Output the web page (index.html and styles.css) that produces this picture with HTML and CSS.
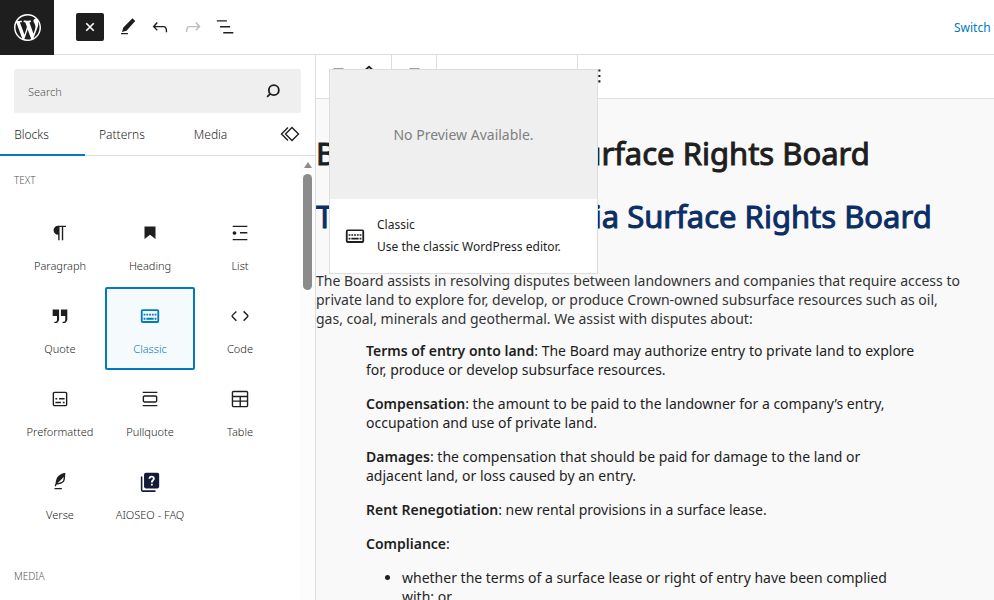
FILE: index.html
```html
<!DOCTYPE html>
<html lang="en">
<head>
<meta charset="utf-8">
<meta name="viewport" content="width=device-width, initial-scale=1">
<title>Edit Page</title>
<link rel="stylesheet" href="styles.css">
</head>
<body>
<div class="editor">
  <header class="topbar">
    <a class="brand" href="#" aria-label="View Pages">
      <svg viewBox="0 0 20 20"><path d="M20 10c0-5.51-4.49-10-10-10C4.48 0 0 4.49 0 10c0 5.52 4.48 10 10 10 5.51 0 10-4.48 10-10zM7.78 15.37L4.37 6.22c.55-.02 1.17-.08 1.17-.08.5-.06.44-1.13-.06-1.11 0 0-1.45.11-2.37.11-.18 0-.37 0-.58-.01C4.12 2.69 6.87 1.11 10 1.11c2.33 0 4.45.87 6.05 2.34-.68-.11-1.65.39-1.65 1.58 0 .74.45 1.36.9 2.1.35.61.55 1.36.55 2.46 0 1.49-1.4 5-1.4 5l-3.03-8.37c.54-.02.82-.17.82-.17.5-.05.44-1.25-.06-1.22 0 0-1.44.12-2.38.12-.87 0-2.33-.12-2.33-.12-.5-.03-.56 1.2-.06 1.22l.92.08 1.26 3.41zM17.41 10c.24-.64.74-1.87.43-4.25.7 1.29 1.05 2.71 1.05 4.25 0 3.29-1.73 6.24-4.4 7.78.97-2.59 1.94-5.2 2.92-7.78zM6.1 18.09C3.12 16.65 1.11 13.53 1.11 10c0-1.3.23-2.48.72-3.59C3.25 10.3 4.67 14.2 6.1 18.09zm4.03-6.63l2.58 6.98c-.86.29-1.76.45-2.71.45-.79 0-1.57-.11-2.29-.33.81-2.38 1.62-4.74 2.42-7.1z"/></svg>
    </a>
    <div class="tools">
      <button class="tool tool-close" type="button" aria-label="Toggle block inserter"><svg viewBox="0 0 24 24"><path d="M7.500 7.500l9 9M16.500 7.500l-9 9" fill="none" stroke="currentColor" stroke-width="2"/></svg></button>
      <button class="tool" type="button" aria-label="Tools"><svg viewBox="0 0 24 24"><path d="m21 5.500-3-3L8 12.500l-1.500 5 5-1.500L21 5.500Zm-8 13H5.500V20H13v-1.500Z"/></svg></button>
      <button class="tool" type="button" aria-label="Undo"><svg viewBox="0 0 24 24"><path d="M18.300 11.700c-.6-.6-1.400-.9-2.300-.9H6.700l2.900-3.300-1.100-1-4.500 5L8.500 16l1-1-2.700-2.700H16c.5 0 .9.200 1.300.5 1 1 1 3.400 1 4.500v.3h1.500v-.2c0-1.500 0-4.300-1.500-5.700z"/></svg></button>
      <button class="tool" type="button" aria-label="Redo" disabled><svg viewBox="0 0 24 24"><path d="M15.600 6.500l-1.100 1 2.900 3.300H8c-.9 0-1.700.3-2.300.9-1.400 1.500-1.400 4.200-1.400 5.600v.2h1.500v-.3c0-1.100 0-3.500 1-4.500.3-.3.700-.5 1.300-.5h9.200L14.500 15l1.100 1.100 4.600-4.600-4.600-5z"/></svg></button>
      <button class="tool" type="button" aria-label="Document overview"><svg viewBox="0 0 24 24"><path d="M2 4.500h11v1.600H2V4.500ZM5.500 11h11v1.600h-11V11ZM20 17.500H9v1.600h11v-1.600Z"/></svg></button>
    </div>
    <a class="switch" href="#">Switch to</a>
  </header>

  <div class="workspace">
    <aside class="inserter">
      <div class="search">
        <label class="sr" for="block-search">Search for blocks</label>
        <input id="block-search" type="text" placeholder="Search">
        <svg viewBox="0 0 24 24"><path d="M13 5a6 6 0 1 1 0 12a6 6 0 1 1 0-12M8.800 15.200L5 19" fill="none" stroke="currentColor" stroke-width="2.200"/></svg>
      </div>
      <nav class="tabs">
        <button class="tab tab-active" type="button">Blocks</button>
        <button class="tab" type="button">Patterns</button>
        <button class="tab" type="button">Media</button>
        <button class="tab tab-icon" type="button" aria-label="Synced patterns"><svg viewBox="0 0 20 16"><path d="M12 1.500L18.500 8 12 14.500 5.500 8zM8 1.500L1.500 8 8 14.500" /></svg></button>
      </nav>
      <div class="library">
        <div class="groups">
          <h2 class="group-title">Text</h2>
          <div class="blocks">
            <button class="block" type="button"><svg viewBox="0 0 24 24"><path d="M10 14v6h1.500V5.500H14V20h1.500V5.500h3V4H10a5 5 0 0 0 0 10z"/></svg>Paragraph</button>
            <button class="block" type="button"><svg viewBox="0 0 24 24"><path d="M6 5v13.600l6-4.700 6 4.700V5z"/></svg>Heading</button>
            <button class="block" type="button"><svg viewBox="0 0 24 24"><path d="M4 4v1.500h16V4H4zm8 8.500h8V11h-8v1.500zM4 20h16v-1.500H4V20zm4-8c0-1.100-.9-2-2-2s-2 .9-2 2 .9 2 2 2 2-.9 2-2z"/></svg>List</button>
            <button class="block" type="button"><svg viewBox="0 0 24 24"><path d="M13 5v7h4.700v4c0 .8-.2 1.400-.5 1.700-.6.6-1.200.6-2.100.5h-.3v1.500h.5c1 0 2.300-.1 3.300-1 .6-.6 1.400-1.600 1.400-2.800V5H13zm-9 7h4.700v4c0 .8-.2 1.400-.5 1.700-.6.6-1.200.6-2.100.5h-.3v1.500h.5c1 0 2.300-.1 3.300-1 .6-.6 1.400-1.600 1.400-2.800V5H4v7z"/></svg>Quote</button>
            <button class="block block-selected" type="button"><svg viewBox="0 0 24 24"><path d="M20 6.500v11H4v-11h16M20 4.500H4a2 2 0 0 0-2 2v11c0 1.100.9 2 2 2h16a2 2 0 0 0 2-2v-11a2 2 0 0 0-2-2zM5 9.500h2v2H5zM8 9.500h2v2H8zM11 9.500h2v2h-2zM14 9.500h2v2h-2zM17 9.500h2v2h-2zM5 14h2v2H5zM8 14h8v2H8zM17 14h2v2h-2z"/></svg>Classic</button>
            <button class="block" type="button"><svg viewBox="0 0 24 24"><path d="M20.800 10.700l-4.300-4.300-1.100 1.100 4.300 4.300c.1.100.1.300 0 .4l-4.300 4.300 1.100 1.100 4.300-4.300c.7-.8.7-1.900 0-2.600zM4.200 11.800l4.300-4.300-1-1-4.300 4.300c-.7.7-.7 1.800 0 2.500l4.300 4.300 1.100-1.100-4.300-4.300c-.2-.1-.2-.3-.1-.4z"/></svg>Code</button>
            <button class="block" type="button"><svg viewBox="0 0 24 24"><path d="M18 4H6c-1.100 0-2 .9-2 2v12c0 1.100.9 2 2 2h12c1.100 0 2-.9 2-2V6c0-1.100-.9-2-2-2zm.5 14c0 .3-.2.5-.5.5H6c-.3 0-.5-.2-.5-.5V6c0-.3.200-.5.500-.5h12c.3 0 .5.200.5.500v12zM7 16.500h6V15H7v1.500zm4-4h6V11h-6v1.500zM9 11H7v1.500h2V11zm6 5.500h2V15h-2v1.500z"/></svg>Preformatted</button>
            <button class="block" type="button"><svg viewBox="0 0 24 24"><path d="M18 8H6c-1.100 0-2 .9-2 2v4c0 1.100.9 2 2 2h12c1.100 0 2-.9 2-2v-4c0-1.100-.9-2-2-2zm.5 6c0 .3-.2.5-.5.5H6c-.3 0-.5-.2-.5-.5v-4c0-.3.200-.5.500-.5h12c.3 0 .5.200.5.500v4zM4 4v1.500h16V4H4zm0 16h16v-1.500H4V20z"/></svg>Pullquote</button>
            <button class="block" type="button"><svg viewBox="0 0 24 24"><path d="M19 3H5c-1.100 0-2 .9-2 2v14c0 1.100.9 2 2 2h14c1.100 0 2-.9 2-2V5c0-1.100-.9-2-2-2zM5 4.500h14c.3 0 .5.200.5.500v3.500h-15V5c0-.3.200-.5.500-.5zm8 5.500h6.500v3.500H13V10zm-1.500 3.500h-7V10h7v3.500zm-7 5.500v-4h7v4.500H5c-.3 0-.5-.2-.5-.5zm14.500.5h-6V15h6.500v4c0 .3-.2.5-.5.500z"/></svg>Table</button>
            <button class="block" type="button"><svg viewBox="0 0 24 24"><path d="M17.800 2l-.9.3c-.1 0-3.600 1-5.200 2.100C10 5.500 9.300 6.500 8.900 7.100c-.6.9-1.700 4.700-1.700 6.300l-.9 2.300c-.2.4 0 .8.4 1 .1 0 .2.1.3.1.3 0 .6-.2.7-.5l.6-1.500c.3 0 .7-.1 1.200-.2.7-.1 1.400-.3 2.200-.5.8-.2 1.600-.5 2.400-.8.7-.3 1.400-.7 1.900-1.200s.8-1.200 1-1.900c.2-.7.3-1.600.4-2.400.1-.8.1-1.700.2-2.500 0-.8.1-1.500.2-2.100V2zm-1.900 5.600c-.1.800-.2 1.500-.3 2.100-.2.600-.4 1-.6 1.300-.3.300-.8.600-1.400.9-.7.3-1.400.5-2.200.8-.6.200-1.300.3-1.800.4L15 7.500c.3-.3.600-.7 1-1.100 0 .4 0 .8-.1 1.200zM6 20h8v-1.500H6V20z"/></svg>Verse</button>
            <button class="block block-faq" type="button"><svg viewBox="0 0 24 24"><path d="M2 6h1.700v15H18v1.800H4a2 2 0 0 1-2-2V6z"/><path fill-rule="evenodd" d="M20 2H7.500a2 2 0 0 0-2 2v13c0 1.100.9 2 2 2H20c1.100 0 2-.9 2-2V4c0-1.100-.9-2-2-2zm-7 13.800v-2h2v2zm2-3.300h-2c0-2.700 2.200-2.700 2.200-4.200 0-.8-.6-1.300-1.400-1.300s-1.400.5-1.400 1.400h-2c0-1.900 1.500-3.200 3.400-3.200s3.400 1.200 3.400 3c0 2.300-2.200 2.700-2.200 4.300z"/></svg>AIOSEO - FAQ</button>
          </div>
          <h2 class="group-title">Media</h2>
        </div>
        <div class="scrollbar" aria-hidden="true">
          <span class="scroll-arrow"></span>
          <span class="scroll-thumb"></span>
        </div>
      </div>
    </aside>

    <main class="canvas">
      <div class="blockbar">
        <div class="bar-group bar-wide"><svg viewBox="0 0 24 24"><path d="M7 5h11v1H7z"/></svg><svg viewBox="0 0 24 24"><path d="M7.500 7l4.500-4 4.500 4" fill="none" stroke="currentColor" stroke-width="2"/></svg></div>
        <div class="bar-group bar-small"><svg viewBox="0 0 24 24"><path d="M7 5h11v1H7z"/></svg></div>
        <div class="bar-group bar-text"></div>
        <button class="more" type="button" aria-label="Options"><svg viewBox="0 0 24 24"><path d="M10 3h2.500v2.500H10zM10 9.500h2.500V12H10zM10 16h2.500v2.500H10z"/></svg></button>
      </div>
      <article class="page">
        <h1>British Columbia Surface Rights Board</h1>
        <h2>The British Columbia Surface Rights Board</h2>
        <p class="intro">The Board assists in resolving disputes between landowners and companies that require access to private land to explore for, develop, or produce Crown-owned subsurface resources such as oil, gas, coal, minerals and geothermal. We assist with disputes about:</p>
        <div class="topics">
          <p><strong>Terms of entry onto land</strong>: The Board may authorize entry to private land to explore for, produce or develop subsurface resources.</p>
          <p><strong>Compensation</strong>: the amount to be paid to the landowner for a company’s entry, occupation and use of private land.</p>
          <p><strong>Damages</strong>: the compensation that should be paid for damage to the land or adjacent land, or loss caused by an entry.</p>
          <p><strong>Rent Renegotiation</strong>: new rental provisions in a surface lease.</p>
          <p><strong>Compliance</strong>:</p>
          <ul><li>whether the terms of a surface lease or right of entry have been complied with; or</li></ul>
        </div>
      </article>
      <div class="preview" role="tooltip">
        <div class="preview-empty">No Preview Available.</div>
        <div class="preview-card">
          <svg viewBox="0 0 24 24"><path d="M20 6.500v11H4v-11h16M20 5H4a2 2 0 0 0-2 2v10.500c0 1.100.9 2 2 2h16a2 2 0 0 0 2-2V7a2 2 0 0 0-2-2zM5 10h2v1.700H5zM8 10h2v1.700H8zM11 10h2v1.700h-2zM14 10h2v1.700h-2zM17 10h2v1.700h-2zM5 14h2v1.700H5zM8 14h8v1.700H8zM17 14h2v1.700h-2z"/></svg>
          <div>
            <div>Classic</div>
            <div>Use the classic WordPress editor.</div>
          </div>
        </div>
      </div>
    </main>
  </div>
</div>
</body>
</html>
```
FILE: styles.css
```css
* { box-sizing: border-box; }

body {
  margin: 0;
  font-family: "Noto Sans", "Open Sans", sans-serif;
  font-size: 11px;
  color: #1e1e1e;
  background: #fff;
}

button, input { font: inherit; color: inherit; }
button { border: 0; padding: 0; background: none; }
svg { display: block; fill: currentColor; width: 22px; height: 22px; flex: none; }
a { text-decoration: none; }

.sr {
  position: absolute;
  width: 1px;
  height: 1px;
  overflow: hidden;
  clip-path: inset(50%);
}

.editor {
  display: flex;
  flex-direction: column;
  height: 100vh;
  overflow: hidden;
}

/* Top bar */
.topbar {
  display: flex;
  align-items: center;
  flex: none;
  height: 55px;
  border-bottom: 1px solid #ddd;
}
.brand {
  display: grid;
  place-items: center;
  align-self: stretch;
  width: 54px;
  margin-bottom: -1px;
  background: #1e1e1e;
  color: #fff;
}
.brand svg { width: 27px; height: 27px; }
.tools { display: flex; gap: 5px; margin-left: 22px; }
.tool {
  display: grid;
  place-items: center;
  width: 28px;
  height: 28px;
  border-radius: 2px;
}
.tool:disabled { color: #bbb; }
.tool-close { margin-right: 4px; background: #1e1e1e; color: #fff; }
.tool-close svg { width: 20px; height: 20px; }
.switch {
  width: 40px;
  margin-left: auto;
  overflow: hidden;
  white-space: nowrap;
  font-size: 12px;
  color: #007cba;
}

/* Inserter */
.workspace { display: flex; flex: 1; min-height: 0; }
.inserter {
  display: flex;
  flex-direction: column;
  flex: none;
  width: 316px;
  border-right: 1px solid #ddd;
  font-weight: 300;
}
.search {
  display: flex;
  align-items: center;
  height: 44px;
  margin: 14px 14px 0 14px;
  padding: 0 18px 0 14px;
  border-radius: 2px;
  background: #efefef;
}
.search input {
  flex: 1;
  min-width: 0;
  padding: 0;
  border: 0;
  outline: 0;
  background: none;
}
.search input::placeholder { color: #555; opacity: 1; }
.search svg { width: 20px; height: 20px; }

.tabs {
  display: flex;
  flex: none;
  height: 43px;
  border-bottom: 1px solid #ddd;
}
.tab { padding: 0 24px 0 14px; font-size: 12px; }
.tab-active {
  width: 85px;
  margin-bottom: -1px;
  padding: 0 36px 0 14px;
  box-shadow: inset 0 -2px #007cba;
}
.tab:nth-child(2) { padding: 0 35px 0 14px; }
.tab-icon { margin-left: auto; padding: 0 15px 0 0; }
.tab-icon svg {
  width: 20px;
  height: 16px;
  fill: none;
  stroke: currentColor;
  stroke-width: 1.4;
}

.library { display: flex; flex: 1; min-height: 0; }
.groups { flex: 1; overflow: hidden; }
.group-title {
  margin: 0;
  padding: 16px 14px;
  font-size: 10px;
  line-height: 16px;
  font-weight: 300;
  text-transform: uppercase;
  color: #555;
}
.blocks {
  display: grid;
  grid-template-columns: repeat(3, 1fr);
  grid-auto-rows: 83px;
  padding: 0 15px 16px 15px;
}
.block {
  display: flex;
  flex-direction: column;
  align-items: center;
  gap: 14px;
  padding-top: 18px;
  line-height: 16px;
  white-space: nowrap;
}
.block-selected {
  padding-top: 16px;
  border: 2px solid #007cba;
  border-radius: 2px;
  background: #f5fafd;
  color: #007cba;
}
.block-faq svg { color: #141b38; }

.scrollbar {
  display: flex;
  flex-direction: column;
  align-items: center;
  gap: 6px;
  width: 15px;
  padding-top: 6px;
  background: #fcfcfc;
}
.scroll-arrow {
  border: 4px solid transparent;
  border-top: 0;
  border-bottom: 6px solid #8b8b8b;
}
.scroll-thumb {
  width: 9px;
  height: 116px;
  border-radius: 5px;
  background: #8b8b8b;
}

/* Canvas */
.canvas {
  position: relative;
  display: flex;
  flex-direction: column;
  flex: 1;
  min-width: 0;
}
.blockbar {
  display: flex;
  flex: none;
  height: 44px;
  border-bottom: 1px solid #ddd;
  background: #fff;
}
.bar-group {
  display: flex;
  gap: 9px;
  padding: 9px 11px 0;
  border-right: 1px solid #ddd;
}
.bar-wide { width: 76px; }
.bar-small { width: 45px; }
.bar-text { width: 141px; }
.more { width: 44px; }
.more svg { width: 20px; height: 20px; margin: 0 auto; }

.page {
  flex: 1;
  min-height: 0;
  overflow: hidden;
  background: #f9f9f9;
  font-size: 14px;
  line-height: 19px;
}
.page h1, .page h2 {
  margin: 0;
  font-size: 31px;
  line-height: 44px;
  font-weight: 400;
  white-space: nowrap;
  -webkit-text-stroke: 1px;
}
.page h1 { margin-top: 32px; }
.page h2 { margin-top: 19px; color: #0b2e66; }
.intro { margin: 33px 0 0; padding-right: 30px; color: #333; }
.topics { padding: 0 77px 0 50px; }
.topics p { margin: 13px 0 15px; }
.topics strong { font-weight: 600; }
.topics ul { margin: 14px 0; padding-left: 36px; }

/* Hover preview lies over the canvas */
.preview {
  position: absolute;
  top: 14px;
  left: 13px;
  width: 269px;
  border: 1px solid #ddd;
  background: #fff;
}
.preview-empty {
  display: grid;
  place-items: center;
  height: 129px;
  background: #efefef;
  color: #808080;
  font-size: 14px;
}
.preview-card {
  display: flex;
  align-items: center;
  gap: 11px;
  padding: 15px 14px;
  font-size: 12px;
  line-height: 22px;
}
```
